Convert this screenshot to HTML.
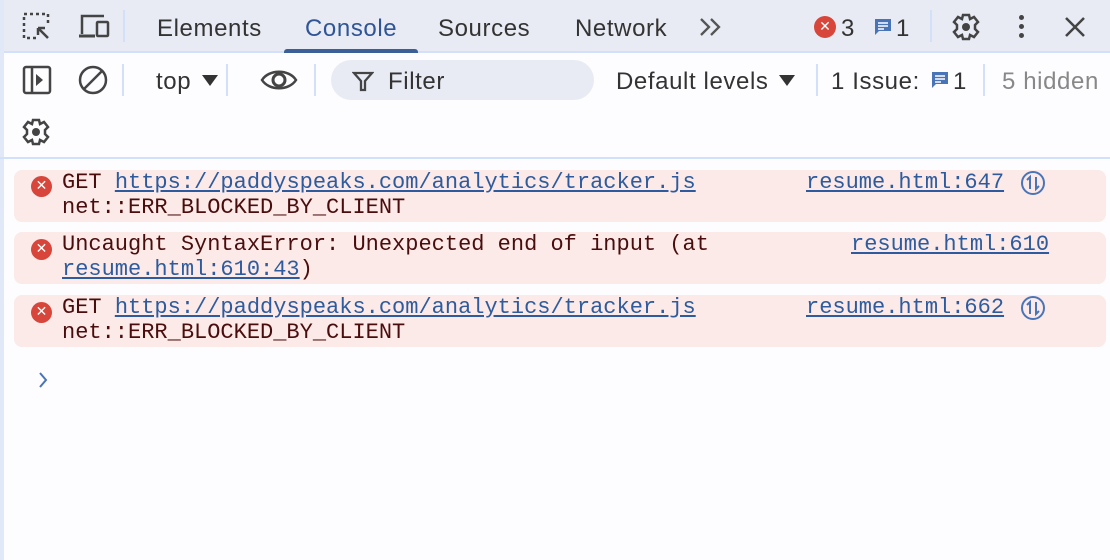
<!DOCTYPE html>
<html><head><style>
*{margin:0;padding:0;box-sizing:border-box}
body{width:1110px;height:560px;background:#fdfdff;font-family:"Liberation Sans",sans-serif;position:relative;overflow:hidden;color:#1f1f1f}
.abs{position:absolute}
.top{left:0;top:0;width:1110px;height:53px;background:#e8ebf4;border-bottom:2px solid #d3e0f9}
.lb{left:0;top:0;width:4px;height:560px;background:#e1e8f7}
.t{font-size:24px;letter-spacing:.6px;color:#333;top:15px}
.sep{width:2px;background:#d3e0f9}
.mono{font-family:"Liberation Mono",monospace;font-size:22px;color:#4a0d0d;line-height:25px}
.msg{left:14px;width:1092px;height:52px;background:#fbeae8;border-radius:8px}
a{color:#2e5b9e;text-decoration:underline}
.err{width:21px;height:21px;border-radius:50%;background:#d8453b;color:#fff;font-size:14px;line-height:21px;text-align:center;font-family:"DejaVu Sans",sans-serif}
</style></head><body>
<div class="abs top"></div>
<div class="abs lb"></div>
<svg class="abs" style="left:22px;top:12px" width="32" height="30" viewBox="0 0 32 30"><rect x="2" y="2" width="24" height="24" fill="none" stroke="#444" stroke-width="2.5" stroke-dasharray="3 3"/><rect x="14" y="14" width="16" height="16" fill="#e8ebf4"/><path d="M16 16l10 10M16 16h7M16 16v7" stroke="#444" stroke-width="2.5" fill="none"/></svg>
<svg class="abs" style="left:78px;top:14px" width="34" height="26" viewBox="0 0 34 26"><path d="M4 20V2h22" stroke="#444" stroke-width="2.5" fill="none"/><path d="M1 22h16" stroke="#444" stroke-width="3"/><rect x="19" y="8" width="11" height="14" rx="1" fill="none" stroke="#444" stroke-width="2.5"/></svg>
<div class="abs sep" style="left:123px;top:10px;height:32px"></div>
<div class="abs t" style="left:157px">Elements</div>
<div class="abs t" style="left:305px;color:#2f5596">Console</div>
<div class="abs" style="left:284px;top:49px;width:134px;height:4px;background:#3d5f97;border-radius:3px 3px 0 0"></div>
<div class="abs t" style="left:438px">Sources</div>
<div class="abs t" style="left:575px">Network</div>
<svg class="abs" style="left:699px;top:17px" width="26" height="20"><path d="M2 2l8 8-8 8M12 2l8 8-8 8" fill="none" stroke="#555" stroke-width="2.3"/></svg>
<div class="abs err" style="left:814px;top:16px;width:22px;height:22px;line-height:22px">✕</div>
<div class="abs t" style="left:841px">3</div>
<svg class="abs" style="left:873px;top:17px" width="20" height="20" viewBox="0 0 20 20"><path d="M2 2h16v12H6l-4 4z" fill="#4a74b8"/><path d="M5 6h10M5 9h10M5 12h6" stroke="#fff" stroke-width="1.5"/></svg>
<div class="abs t" style="left:896px">1</div>
<div class="abs sep" style="left:930px;top:10px;height:32px"></div>
<svg class="abs" style="left:950px;top:12px" width="32" height="30" viewBox="-15 -15 30 30"><path d="M-3-12h6l1 4 4-2 4 5-3 3v4l3 3-4 5-4-2-1 4h-6l-1-4-4 2-4-5 3-3v-4l-3-3 4-5 4 2z" fill="none" stroke="#444" stroke-width="2.5"/><circle r="4" fill="#444"/></svg>
<div class="abs" style="left:1019px;top:15px;width:5px;height:5px;border-radius:50%;background:#444;box-shadow:0 9px 0 #444,0 18px 0 #444"></div>
<svg class="abs" style="left:1064px;top:16px" width="22" height="22"><path d="M2 2l18 18M20 2L2 20" stroke="#444" stroke-width="2.5"/></svg>
<svg class="abs" style="left:22px;top:65px" width="30" height="30"><rect x="2" y="2" width="26" height="26" rx="2" fill="none" stroke="#444" stroke-width="2.5"/><path d="M10 2v26" stroke="#444" stroke-width="2.5"/><path d="M14 9l7 6-7 6z" fill="#444"/></svg>
<svg class="abs" style="left:78px;top:65px" width="30" height="30"><circle cx="15" cy="15" r="13" fill="none" stroke="#444" stroke-width="2.5"/><path d="M6 24L24 6" stroke="#444" stroke-width="2.5"/></svg>
<div class="abs sep" style="left:122px;top:64px;height:32px"></div>
<div class="abs t" style="left:156px;top:68px">top</div>
<svg class="abs" style="left:202px;top:75px" width="16" height="12"><path d="M0 0h16L8 11z" fill="#333"/></svg>
<div class="abs sep" style="left:226px;top:64px;height:32px"></div>
<svg class="abs" style="left:259px;top:66px" width="40" height="28" viewBox="0 0 40 28"><path d="M3 14C10 3 30 3 37 14 30 25 10 25 3 14z" fill="none" stroke="#444" stroke-width="2.5"/><circle cx="20" cy="14" r="6" fill="none" stroke="#444" stroke-width="3"/></svg>
<div class="abs sep" style="left:314px;top:64px;height:32px"></div>
<div class="abs" style="left:331px;top:60px;width:263px;height:40px;border-radius:20px;background:#e8ebf4"></div>
<svg class="abs" style="left:352px;top:70px" width="22" height="22"><path d="M2 3h18l-7 8v9h-4v-9z" fill="none" stroke="#444" stroke-width="2.3"/></svg>
<div class="abs t" style="left:388px;top:68px">Filter</div>
<div class="abs t" style="left:616px;top:68px">Default levels</div>
<svg class="abs" style="left:779px;top:75px" width="16" height="12"><path d="M0 0h16L8 11z" fill="#333"/></svg>
<div class="abs sep" style="left:816px;top:64px;height:32px"></div>
<div class="abs t" style="left:831px;top:68px">1 Issue:</div>
<svg class="abs" style="left:930px;top:70px" width="20" height="20" viewBox="0 0 20 20"><path d="M2 2h16v12H6l-4 4z" fill="#4a74b8"/><path d="M5 6h10M5 9h10M5 12h6" stroke="#fff" stroke-width="1.5"/></svg>
<div class="abs t" style="left:953px;top:68px">1</div>
<div class="abs sep" style="left:983px;top:64px;height:32px"></div>
<div class="abs t" style="left:1002px;top:68px;color:#888">5 hidden</div>
<svg class="abs" style="left:20px;top:116px" width="32" height="32" viewBox="-16 -16 32 32"><path d="M-3-12h6l1 4 4-2 4 5-3 3v4l3 3-4 5-4-2-1 4h-6l-1-4-4 2-4-5 3-3v-4l-3-3 4-5 4 2z" fill="none" stroke="#444" stroke-width="2.5"/><circle r="4" fill="#444"/></svg>
<div class="abs" style="left:0;top:157px;width:1110px;height:2px;background:#d3e0f9"></div>
<div class="abs msg" style="top:170px"></div>
<div class="abs msg" style="top:232px"></div>
<div class="abs msg" style="top:295px"></div>
<div class="abs err" style="left:31px;top:176px">✕</div>
<div class="abs err" style="left:31px;top:239px">✕</div>
<div class="abs err" style="left:31px;top:302px">✕</div>
<div class="abs mono" style="left:62px;top:170px">GET <a>https://paddyspeaks.com/analytics/tracker.js</a><br>net::ERR_BLOCKED_BY_CLIENT</div>
<div class="abs mono" style="left:806px;top:170px"><a>resume.html:647</a></div>
<div class="abs mono" style="left:62px;top:232px">Uncaught SyntaxError: Unexpected end of input (at<br><a>resume.html:610:43</a>)</div>
<div class="abs mono" style="left:851px;top:232px"><a>resume.html:610</a></div>
<div class="abs mono" style="left:62px;top:295px">GET <a>https://paddyspeaks.com/analytics/tracker.js</a><br>net::ERR_BLOCKED_BY_CLIENT</div>
<div class="abs mono" style="left:806px;top:295px"><a>resume.html:662</a></div>
<svg class="abs" style="left:1020px;top:170px" width="26" height="26"><circle cx="13" cy="13" r="11" fill="none" stroke="#4a74b8" stroke-width="2"/><path d="M10 19V7l-3 3M16 7v12l3-3" fill="none" stroke="#4a74b8" stroke-width="2"/></svg>
<svg class="abs" style="left:1020px;top:295px" width="26" height="26"><circle cx="13" cy="13" r="11" fill="none" stroke="#4a74b8" stroke-width="2"/><path d="M10 19V7l-3 3M16 7v12l3-3" fill="none" stroke="#4a74b8" stroke-width="2"/></svg>
<svg class="abs" style="left:38px;top:371px" width="12" height="18"><path d="M2 2l6 7-6 7" fill="none" stroke="#4a74b8" stroke-width="2"/></svg>
</body></html>
